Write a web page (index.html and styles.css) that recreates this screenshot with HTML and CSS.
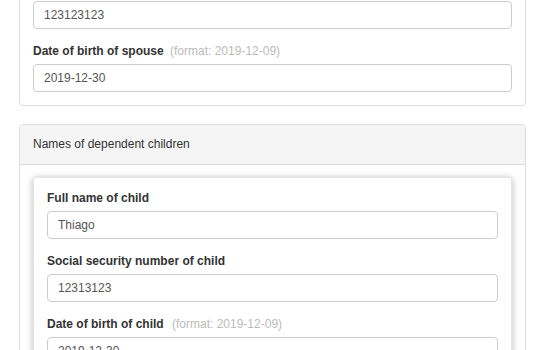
FILE: index.html
```html
<!DOCTYPE html>
<html>
<head>
<meta charset="utf-8">
<link rel="stylesheet" href="styles.css">
</head>
<body>
<div class="page">
  <div class="panel">
    <div class="panel-body">
      <div class="form-group">
        <input class="form-control" type="text" value="123123123">
      </div>
      <div class="form-group">
        <label class="control-label">Date of birth of spouse <span class="hint">(format: 2019-12-09)</span></label>
        <input class="form-control" type="text" value="2019-12-30">
      </div>
    </div>
  </div>

  <div class="panel">
    <div class="panel-heading">Names of dependent children</div>
    <div class="panel-body panel-body-list">
      <div class="card">
        <div class="form-group">
          <label class="control-label">Full name of child</label>
          <input class="form-control" type="text" value="Thiago">
        </div>
        <div class="form-group">
          <label class="control-label">Social security number of child</label>
          <input class="form-control" type="text" value="12313123">
        </div>
        <div class="form-group">
          <label class="control-label">Date of birth of child <span class="hint hint-wide">(format: 2019-12-09)</span></label>
          <input class="form-control" type="text" value="2019-12-30">
        </div>
      </div>
    </div>
  </div>
</div>
</body>
</html>
```
FILE: styles.css
```css
html, body {
  margin: 0;
  padding: 0;
  background: #fff;
  overflow: hidden;
}
body {
  font-family: "Liberation Sans", Arial, sans-serif;
  font-size: 12px;
  color: #333;
}
.page {
  margin: -13px 18px 0 19px;
}
.panel {
  border: 1px solid #ddd;
  border-radius: 4px;
  background: #fff;
  margin-bottom: 18px;
}
.panel-heading {
  background: #f5f5f5;
  border-bottom: 1px solid #ddd;
  border-radius: 3px 3px 0 0;
  padding: 11px 13px;
  line-height: 17px;
  color: #333;
}
.panel-body {
  padding: 13px;
}
.panel-body-list {
  padding-top: 12px;
}
.form-group {
  margin-bottom: 14px;
}
.form-group:last-child {
  margin-bottom: 0;
}
.control-label {
  display: block;
  font-weight: bold;
  line-height: 17px;
  margin-bottom: 4px;
  color: #333;
}
.hint {
  font-weight: normal;
  color: #bbb;
  margin-left: 3px;
}
.hint-wide {
  margin-left: 5px;
}
.form-control {
  display: block;
  box-sizing: border-box;
  width: 100%;
  height: 28px;
  padding: 0 10px;
  border: 1px solid #ccc;
  border-radius: 4px;
  font-family: "Liberation Sans", Arial, sans-serif;
  font-size: 12px;
  color: #555;
  background: #fff;
  margin: 0;
}
.card {
  border: 1px solid #e4e4e4;
  border-radius: 3px;
  box-shadow: 0 1px 7px rgba(0, 0, 0, 0.28);
  padding: 12px 13px 13px;
  background: #fff;
}
```
